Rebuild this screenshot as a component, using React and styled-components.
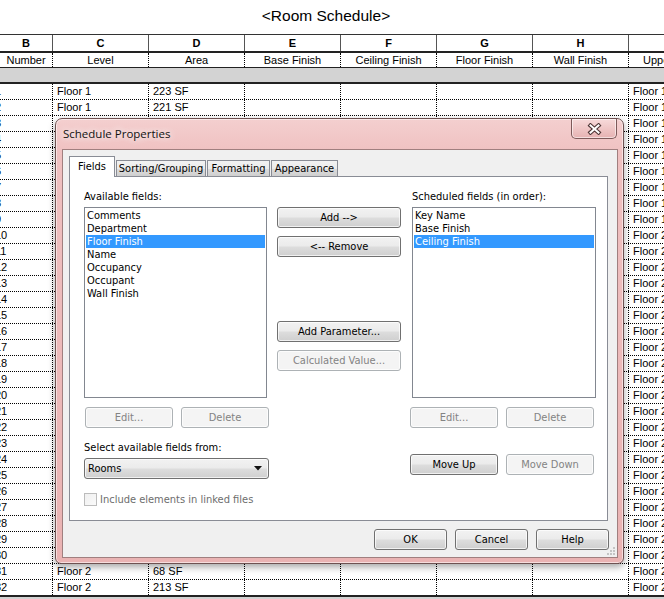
import React from "react";
import styled, { createGlobalStyle } from "styled-components";

const GlobalStyle = createGlobalStyle`
  html, body {
    margin: 0;
    padding: 0;
    overflow: hidden;
    background: #fff;
  }
  body {
    font-family: "Liberation Sans", Arial, sans-serif;
    color: #000;
  }
`;

const uiFont = `"DejaVu Sans Condensed", "Liberation Sans", Arial, sans-serif`;

const letters = ["B", "C", "D", "E", "F", "G", "H", "I"];
const names = [
  "Number",
  "Level",
  "Area",
  "Base Finish",
  "Ceiling Finish",
  "Floor Finish",
  "Wall Finish",
  "Upper Limit",
];
// only the first two and last two rows show level / area, the rest sit under the dialog
const areas = {
  1: "223 SF",
  2: "221 SF",
  31: "68 SF",
  32: "213 SF",
};
const rows = Array.from({ length: 32 }, (_, i) => ({
  num: String(i + 1),
  level: i < 9 ? "Floor 1" : "Floor 2",
  area: areas[i + 1],
}));

const available = ["Comments", "Department", "Floor Finish", "Name", "Occupancy", "Occupant", "Wall Finish"];
const scheduled = ["Key Name", "Base Finish", "Ceiling Finish"];

export default function App() {
  return (
    <Page>
      <GlobalStyle />
      <Title>&lt;Room Schedule&gt;</Title>
      <Sheet>
        <Row $h={16} $border="2px solid #222">
          {letters.map((l) => (
            <HeadCell key={l} $solid>
              {l}
            </HeadCell>
          ))}
        </Row>
        <Row $h={14} $border="1px solid #222">
          {names.map((n, i) => (
            <HeadCell key={n} $align={i === 7 ? "left" : "center"} $pad={i === 7 ? 14 : 4}>
              {n}
            </HeadCell>
          ))}
        </Row>
        <GroupRow $border="2px solid #222" />
        {rows.map((r, i) => (
          <Row key={r.num} $h={15} $border={i === 31 ? "2px solid #222" : "1px dotted #000"}>
            <NumCell>{r.num}</NumCell>
            <Cell>{r.area ? r.level : ""}</Cell>
            <Cell>{r.area}</Cell>
            <Cell />
            <Cell />
            <Cell />
            <Cell />
            <Cell>{r.level}</Cell>
          </Row>
        ))}
        <GroupRow />
      </Sheet>

      <Dialog>
        <TitleBar>
          <Caption>Schedule Properties</Caption>
          <CloseButton>
            <svg width="15" height="12" viewBox="0 0 15 12">
              <path d="M3.5 2.5 L11.5 9.5 M11.5 2.5 L3.5 9.5" stroke="#4d3434" strokeWidth="4.2" strokeLinecap="square" />
              <path d="M3.5 2.5 L11.5 9.5 M11.5 2.5 L3.5 9.5" stroke="#fff" strokeWidth="2" strokeLinecap="square" />
            </svg>
          </CloseButton>
        </TitleBar>
        <Client>
          <TabStrip>
            <Tab $active $w={46}>Fields</Tab>
            <Tab $w={90}>Sorting/Grouping</Tab>
            <Tab $w={63}>Formatting</Tab>
            <Tab $w={67}>Appearance</Tab>
          </TabStrip>
          <Panel>
            <FieldsGrid>
              <Column>
                <Label>Available fields:</Label>
                <ListBox>
                  {available.map((f) => (
                    <Item key={f} $selected={f === "Floor Finish"}>
                      {f}
                    </Item>
                  ))}
                </ListBox>
                <ButtonPair>
                  <Button disabled $w={88}>Edit...</Button>
                  <Button disabled $w={88}>Delete</Button>
                </ButtonPair>
                <Label $top={13}>Select available fields from:</Label>
                <Combo>
                  <span>Rooms</span>
                  <svg width="8" height="5" viewBox="0 0 8 5">
                    <path d="M0 0 H8 L4 4.5 Z" fill="#111" />
                  </svg>
                </Combo>
                <CheckRow>
                  <CheckBox />
                  Include elements in linked files
                </CheckRow>
              </Column>

              <Middle>
                <Button $w={124}>Add --&gt;</Button>
                <Button $w={124} $top={8}>&lt;-- Remove</Button>
                <Button $w={124} $top={64}>Add Parameter...</Button>
                <Button disabled $w={124} $top={8}>Calculated Value...</Button>
              </Middle>

              <Column $shift={1}>
                <Label $indent={2}>Scheduled fields (in order):</Label>
                <ListBox $indent={2} $w={184}>
                  {scheduled.map((f) => (
                    <Item key={f} $selected={f === "Ceiling Finish"}>
                      {f}
                    </Item>
                  ))}
                </ListBox>
                <ButtonPair $indent={0}>
                  <Button disabled $w={88}>Edit...</Button>
                  <Button disabled $w={88}>Delete</Button>
                </ButtonPair>
                <ButtonPair $indent={0} $top={26}>
                  <Button $w={88}>Move Up</Button>
                  <Button disabled $w={88}>Move Down</Button>
                </ButtonPair>
              </Column>
            </FieldsGrid>
          </Panel>
          <Footer>
            <Button $w={73}>OK</Button>
            <Button $w={73}>Cancel</Button>
            <Button $w={73}>Help</Button>
          </Footer>
          <Grip width="10" height="10" viewBox="0 0 10 10">
            <rect x="7" y="1" width="2" height="2" fill="#c4c4c4" />
            <rect x="4" y="4" width="2" height="2" fill="#c4c4c4" />
            <rect x="7" y="4" width="2" height="2" fill="#c4c4c4" />
            <rect x="1" y="7" width="2" height="2" fill="#c4c4c4" />
            <rect x="4" y="7" width="2" height="2" fill="#c4c4c4" />
            <rect x="7" y="7" width="2" height="2" fill="#c4c4c4" />
          </Grip>
        </Client>
      </Dialog>
    </Page>
  );
}

/* ---------- schedule ---------- */

const Page = styled.div`
  position: relative;
  width: 664px;
  height: 599px;
  overflow: hidden;
  background: #fff;
`;

const Title = styled.div`
  height: 34px;
  line-height: 31px;
  padding-right: 12px;
  text-align: center;
  font-size: 15.5px;
`;

const Sheet = styled.div`
  width: 749px;
  border-top: 1px solid #333;
  font-size: 11px;
`;

const Row = styled.div`
  display: grid;
  grid-template-columns: 53px repeat(6, 96px) 120px;
  height: ${(p) => p.$h}px;
  line-height: ${(p) => p.$h}px;
  border-bottom: ${(p) => p.$border};
`;

const GroupRow = styled.div`
  height: 14px;
  background: #d3d3d3;
  border-bottom: ${(p) => p.$border || "none"};
`;

const HeadCell = styled.div`
  border-right: 1px ${(p) => (p.$solid ? "solid #555" : "dotted #000")};
  padding: 0 4px 0 ${(p) => p.$pad || 4}px;
  overflow: hidden;
  white-space: nowrap;
  text-align: ${(p) => p.$align || "center"};
  font-weight: ${(p) => (p.$solid ? "bold" : "normal")};
`;

const Cell = styled.div`
  border-right: 1px dotted #000;
  padding: 0 4px;
  overflow: hidden;
  white-space: nowrap;
`;

const NumCell = styled(Cell)`
  text-indent: -9px;
`;

/* ---------- dialog ---------- */

const Dialog = styled.div`
  position: absolute;
  left: 55px;
  top: 118px;
  width: 569px;
  height: 446px;
  box-sizing: border-box;
  display: flex;
  flex-direction: column;
  border: 1px solid #6e5252;
  border-radius: 7px 7px 6px 6px;
  background: linear-gradient(180deg, #f4cfcf 0%, #efc0c0 8%, #eab3b3 100%);
  box-shadow: 0 3px 7px rgba(0, 0, 0, 0.35), inset 0 0 0 1px rgba(255, 255, 255, 0.55);
  font-family: ${uiFont};
  font-size: 11px;
`;

const TitleBar = styled.div`
  height: 30px;
  display: flex;
  align-items: flex-start;
`;

const Caption = styled.div`
  padding-left: 7px;
  line-height: 29px;
  font-family: "Open Sans", "Liberation Sans", sans-serif;
  font-size: 11.5px;
  color: #111;
  text-shadow: 0 0 6px rgba(255, 255, 255, 0.95), 0 0 10px rgba(255, 255, 255, 0.8);
`;

const CloseButton = styled.div`
  margin-left: auto;
  margin-right: 6px;
  width: 46px;
  height: 20px;
  box-sizing: border-box;
  display: flex;
  align-items: center;
  justify-content: center;
  border: 1px solid #7d5a5a;
  border-top: none;
  border-radius: 0 0 5px 5px;
  background: linear-gradient(180deg, #f7dada 0%, #efc6c6 50%, #e6b2b2 100%);
  box-shadow: inset 0 0 0 1px rgba(255, 255, 255, 0.55);
`;

const Client = styled.div`
  position: relative;
  flex: 1;
  margin: 0 5px 5px 6px;
  padding: 6px 8px 7px 6px;
  display: flex;
  flex-direction: column;
  border: 1px solid #a07f7f;
  background: #f0f0f0;
`;

const TabStrip = styled.div`
  height: 20px;
  display: flex;
  align-items: flex-end;
`;

const Tab = styled.div`
  position: relative;
  z-index: ${(p) => (p.$active ? 1 : 0)};
  box-sizing: border-box;
  width: ${(p) => p.$w}px;
  height: ${(p) => (p.$active ? 21 : 16)}px;
  margin-bottom: ${(p) => (p.$active ? -1 : 0)}px;
  margin-left: ${(p) => (p.$active ? 0 : 1)}px;
  border: 1px solid #898c95;
  border-bottom: none;
  background: ${(p) => (p.$active ? "#fff" : "linear-gradient(180deg, #f2f2f2 0%, #ebebeb 50%, #dddddd 51%, #cfcfcf 100%)")};
  text-align: center;
  line-height: ${(p) => (p.$active ? 19 : 15)}px;
  white-space: nowrap;
  overflow: hidden;
`;

const Panel = styled.div`
  flex: 1;
  margin-right: 1px;
  padding: 13px 0 0 14px;
  border: 1px solid #898c95;
  background: #fff;
`;

const FieldsGrid = styled.div`
  display: grid;
  grid-template-columns: 185px 124px 187px;
  column-gap: 8px;
  align-items: start;
`;

const Column = styled.div`
  display: flex;
  flex-direction: column;
  padding-left: ${(p) => p.$shift || 0}px;
`;

const Middle = styled.div`
  display: flex;
  flex-direction: column;
  padding-top: 17px;
`;

const Label = styled.div`
  height: 13px;
  line-height: 13px;
  margin-top: ${(p) => p.$top || 0}px;
  margin-left: ${(p) => p.$indent || 0}px;
  white-space: nowrap;
`;

const ListBox = styled.div`
  width: ${(p) => p.$w || 183}px;
  height: 191px;
  box-sizing: border-box;
  margin-top: 4px;
  margin-left: ${(p) => p.$indent || 0}px;
  padding: 1px 1px;
  border: 1px solid #828790;
  background: #fff;
`;

const Item = styled.div`
  height: 13px;
  line-height: 13px;
  padding-left: 1px;
  white-space: nowrap;
  background: ${(p) => (p.$selected ? "#3399ff" : "transparent")};
  color: ${(p) => (p.$selected ? "#fff" : "#000")};
`;

const ButtonPair = styled.div`
  display: flex;
  gap: 8px;
  margin-top: ${(p) => p.$top || 9}px;
  margin-left: ${(p) => (p.$indent === undefined ? 1 : p.$indent)}px;
`;

const Button = styled.button`
  box-sizing: border-box;
  width: ${(p) => p.$w}px;
  height: 21px;
  margin: ${(p) => p.$top || 0}px 0 0 0;
  padding: 0;
  font-family: ${uiFont};
  font-size: 11px;
  color: ${(p) => (p.disabled ? "#838383" : "#000")};
  border: 1px solid ${(p) => (p.disabled ? "#adb2b5" : "#707070")};
  border-radius: 3px;
  background: ${(p) =>
    p.disabled ? "#f4f4f4" : "linear-gradient(180deg, #f2f2f2 0%, #ebebeb 48%, #dddddd 52%, #cfcfcf 100%)"};
  box-shadow: inset 0 0 0 1px rgba(255, 255, 255, 0.7);
  white-space: nowrap;
`;

const Combo = styled.div`
  box-sizing: border-box;
  width: 185px;
  height: 21px;
  margin-top: 4px;
  padding: 0 6px 0 3px;
  display: flex;
  align-items: center;
  justify-content: space-between;
  border: 1px solid #707070;
  border-radius: 3px;
  background: linear-gradient(180deg, #f2f2f2 0%, #ebebeb 48%, #dddddd 52%, #cfcfcf 100%);
  box-shadow: inset 0 0 0 1px rgba(255, 255, 255, 0.7);
`;

const CheckRow = styled.div`
  margin-top: 14px;
  display: flex;
  align-items: center;
  gap: 3px;
  color: #6d6d6d;
  white-space: nowrap;
`;

const CheckBox = styled.div`
  width: 13px;
  height: 13px;
  box-sizing: border-box;
  border: 1px solid #bcbcbc;
  background: linear-gradient(135deg, #f0f0f0, #fafafa);
`;

const Footer = styled.div`
  margin-top: 8px;
  display: flex;
  justify-content: flex-end;
  gap: 8px;
`;

const Grip = styled.svg`
  position: absolute;
  right: 1px;
  bottom: 1px;
`;
